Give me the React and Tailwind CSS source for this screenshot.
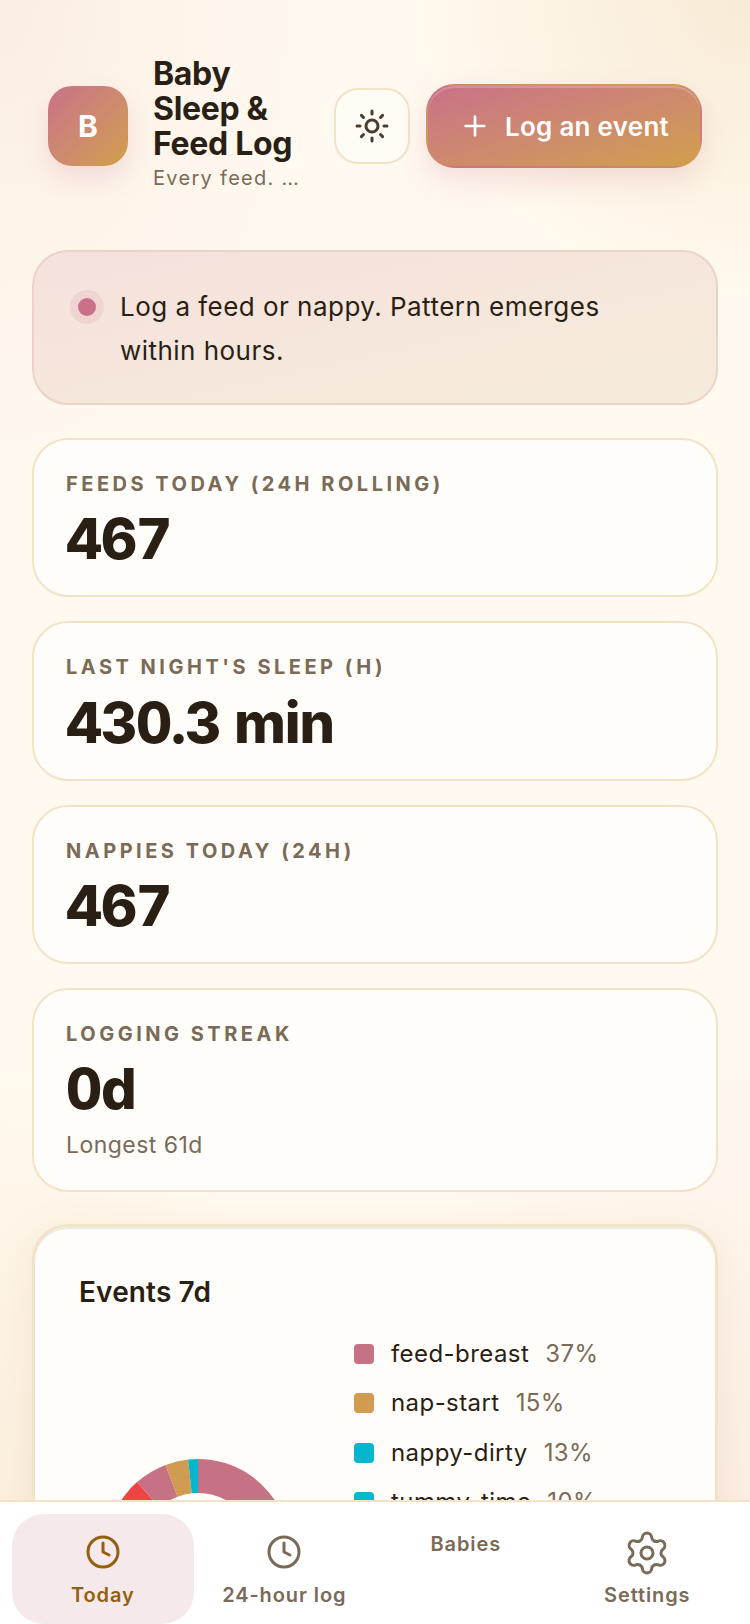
import React from 'react';
import { Clock, Plus, Settings, Sun } from 'lucide-react';

const stats = [
    { label: "Feeds today (24h rolling)", value: "467" },
    { label: "Last night's sleep (h)", value: "430.3 min" },
    { label: "Nappies today (24h)", value: "467" },
    { label: "Logging streak", value: "0d", sub: "Longest 61d" },
];

const legend = [
    { name: "feed-breast", pct: "37%", color: "bg-[#c77284]" },
    { name: "nap-start", pct: "15%", color: "bg-[#d29b52]" },
    { name: "nappy-dirty", pct: "13%", color: "bg-[#06b6cc]" },
    { name: "tummy-time", pct: "10%", color: "bg-[#06b6cc]" },
    { name: "feed-bottle", pct: "8%", color: "bg-[#ef4444]" },
    { name: "nap-end", pct: "7%", color: "bg-[#c77284]" },
    { name: "nappy-wet", pct: "5%", color: "bg-[#d29b52]" },
    { name: "solids", pct: "3%", color: "bg-[#06b6cc]" },
    { name: "pump", pct: "2%", color: "bg-[#ef4444]" },
];

// degrees clockwise from 12 o'clock
const slices = [
    { from: 0, to: 133, color: "#c77284" },
    { from: 133, to: 187, color: "#d29b52" },
    { from: 187, to: 234, color: "#06b6cc" },
    { from: 234, to: 318.5, color: "#ef4444" },
    { from: 318.5, to: 339.4, color: "#c77284" },
    { from: 339.4, to: 353.8, color: "#d29b52" },
    { from: 353.8, to: 360, color: "#06b6cc" },
];

function polar(r, deg) {
    const a = (deg * Math.PI) / 180;
    return `${(100 + r * Math.sin(a)).toFixed(2)} ${(100 - r * Math.cos(a)).toFixed(2)}`;
}

function slicePath({ from, to }) {
    const large = to - from > 180 ? 1 : 0;
    return `M${polar(92, from)}A92 92 0 ${large} 1 ${polar(92, to)}L${polar(58, to)}A58 58 0 ${large} 0 ${polar(58, from)}Z`;
}

function Donut() {
    return (
        <svg width="200" height="200" viewBox="0 0 200 200">
            {slices.map((s) => (
                <path key={s.from} d={slicePath(s)} fill={s.color} />
            ))}
        </svg>
    );
}

function StatCard({ label, value, sub }) {
    return (
        <div className="border-2 border-[#f2e3c6] bg-[#fffdf9] rounded-[36px] px-8 pt-[31px] pb-[28px]">
            <p className="text-[20px] leading-[27.25px] font-[650] uppercase tracking-[0.175em] text-[#7a6a58]">{label}</p>
            <p className="mt-[13px] text-[56px] leading-[56px] font-extrabold tabular-nums tracking-[-0.02em] text-[#2a1f14]">{value}</p>
            {sub && <p className="mt-[12px] text-[23px] leading-[32.5px] tracking-[0.02em] text-[#7a6a58]">{sub}</p>}
        </div>
    );
}

function NavTab({ label, active, children }) {
    return (
        <div className={`flex flex-col items-center pt-4 h-[110px] rounded-[32px] ${active ? "bg-[#f5e9ec] text-[#92600f]" : "text-[#7a6a58]"}`}>
            {children && <div className="h-11 flex items-center justify-center">{children}</div>}
            <span className={`text-[20px] leading-7 font-semibold tracking-[0.045em] ${children ? "mt-[7px]" : ""}`}>{label}</span>
        </div>
    );
}

export default function App() {
    return (
        <div className="h-[1624px] flex flex-col overflow-hidden font-['Inter',sans-serif] bg-[#fff9ef]">
            <main className="relative flex-1 min-h-0 overflow-hidden px-8 bg-[radial-gradient(ellipse_300px_460px_at_0%_0%,#fbeee4_0%,transparent_100%),radial-gradient(ellipse_340px_300px_at_100%_0%,#f8ebd6_0%,transparent_100%),radial-gradient(ellipse_400px_440px_at_100%_100%,#fbeee4_0%,transparent_100%),radial-gradient(ellipse_300px_440px_at_0%_100%,#fbf0de_0%,transparent_100%)]">
                <header className="flex items-center gap-4 px-4 pt-[55.5px]">
                    <div className="w-20 h-20 shrink-0 flex items-center justify-center rounded-[24px] bg-linear-to-br from-[#c97188] to-[#d29f49] text-white text-[30px] font-bold shadow-[0_12px_24px_rgba(201,113,136,0.18)]">
                        B
                    </div>
                    <div className="min-w-0 w-[148px] ml-[9px] mr-[17px] pb-[4.5px]">
                        <h1 className="text-[32px] leading-[35px] font-bold tracking-[-0.01em] text-[#2a1f14]">Baby Sleep &amp; Feed Log</h1>
                        <p className="mt-[3.5px] truncate text-[20px] leading-[28px] tracking-[0.065em] text-[#7a6a58]">Every feed. Every nap.</p>
                    </div>
                    <button type="button" className="w-[76px] h-[76px] shrink-0 flex items-center justify-center rounded-[24px] border-2 border-[#f2e3c6] bg-[#fffcf5] text-[#4a3c2e]">
                        <Sun size={36} strokeWidth={2} />
                    </button>
                    <button type="button" className="w-[276px] h-[84px] shrink-0 flex items-center justify-center gap-[14px] rounded-[28px] border-2 border-transparent bg-linear-to-br from-[#c97188] to-[#d29f49] text-white text-[26px] font-semibold tracking-[0.01em] shadow-[0_12px_28px_rgba(201,113,136,0.2),inset_0_2px_0_rgba(255,255,255,0.2)]">
                        <Plus size={32} strokeWidth={2} />
                        Log an event
                    </button>
                </header>

                <div className="mt-[53.5px] flex gap-6 rounded-[36px] border-2 border-[#edd2ca] bg-linear-to-br from-[#f5e1dd] to-[#f6ecdb] pl-11 pr-16 pt-[33px] pb-[31px]">
                    <span className="shrink-0 mt-[13px] w-[18px] h-[18px] rounded-full bg-[#c97188] shadow-[0_0_0_8px_#efd5d1]" />
                    <p className="text-[26px] leading-[43.5px] tracking-[0.018em] text-[#2a1f14]">Log a feed or nappy. Pattern emerges within hours.</p>
                </div>

                <div className="mt-[33px] flex flex-col gap-6">
                    {stats.map((s) => (
                        <StatCard key={s.label} {...s} />
                    ))}
                </div>

                <section className="mt-8 rounded-[36px] border-[3px] border-[#f2e3c6] bg-[#fffdf9] pl-[44px] pr-8 pt-[47px] pb-10 shadow-[0_10px_40px_rgba(210,150,110,0.16),inset_0_2px_0_rgba(120,120,120,0.14)]">
                    <h2 className="text-[28px] leading-[36px] font-semibold tracking-[0.005em] text-[#2a1f14]">Events 7d</h2>
                    <div className="mt-[20px] flex items-center gap-[38px]">
                        <div className="w-[237px] shrink-0 flex justify-center">
                            <Donut />
                        </div>
                        <ul>
                            {legend.map((item) => (
                                <li key={item.name} className="h-[49.33px] flex items-center text-[24px] tracking-[0.018em] whitespace-nowrap">
                                    <span className={`w-5 h-5 rounded-[4px] ${item.color}`} />
                                    <span className="ml-[17px] text-[#2a1f14]">{item.name}</span>
                                    <span className="ml-[16px] text-[#7a6a58]">{item.pct}</span>
                                </li>
                            ))}
                        </ul>
                    </div>
                </section>
            </main>

            <nav className="shrink-0 h-[124px] border-t-2 border-[#f2e3c6] bg-white px-3 pt-3 grid grid-cols-4">
                <NavTab label="Today" active>
                    <Clock size={36} strokeWidth={2} />
                </NavTab>
                <NavTab label="24-hour log">
                    <Clock size={36} strokeWidth={2} />
                </NavTab>
                <NavTab label="Babies" />
                <NavTab label="Settings">
                    <Settings size={48} strokeWidth={1.5} className="mt-0.5" />
                </NavTab>
            </nav>
        </div>
    );
}
